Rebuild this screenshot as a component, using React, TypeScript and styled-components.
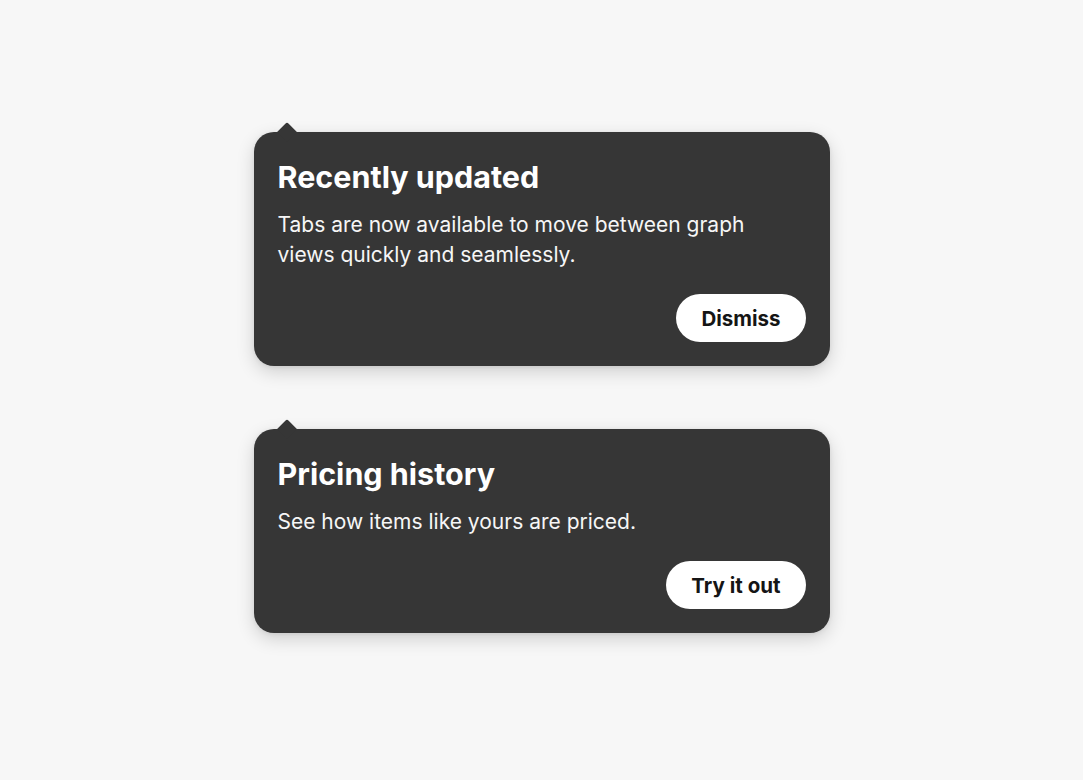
import React from "react";
import styled, { createGlobalStyle } from "styled-components";

const Global = createGlobalStyle`
  html, body { margin: 0; padding: 0; background: #f7f7f7; }
  body { font-family: Inter, "Open Sans", "Liberation Sans", sans-serif; -webkit-font-smoothing: antialiased; }
`;

const Page = styled.div`
  min-height: 780px;
  display: flex;
  flex-direction: column;
  align-items: center;
  gap: 63px;
  padding-top: 132px;
  box-sizing: border-box;
`;

const Card = styled.div`
  position: relative;
  width: 576px;
  box-sizing: border-box;
  background: #363636;
  border-radius: 20px;
  padding: 26px 24px 24px;
  color: #ffffff;
  box-shadow: 0 6px 18px rgba(0, 0, 0, 0.16), 0 1px 4px rgba(0, 0, 0, 0.08);
  display: flex;
  flex-direction: column;

  &::before {
    content: "";
    position: absolute;
    left: 26px;
    top: -7px;
    width: 14px;
    height: 14px;
    background: #363636;
    border-top-left-radius: 2px;
    transform: rotate(45deg);
  }
`;

const Title = styled.h2`
  margin: 0 0 14px;
  font-size: 30.5px;
  line-height: 38px;
  font-weight: 700;
  letter-spacing: 0;
`;

const Body = styled.p`
  margin: 0 0 24px;
  font-size: 21px;
  line-height: 30px;
  font-weight: 400;
  color: #f6f6f6;
  max-width: 480px;
`;

const Actions = styled.div`
  display: flex;
  justify-content: flex-end;
`;

const Button = styled.button`
  height: 48px;
  padding: 0 25px;
  border: none;
  border-radius: 24px;
  background: #ffffff;
  color: #151515;
  font-family: inherit;
  font-size: 20.5px;
  font-weight: 700;
  cursor: pointer;
`;

const tips = [
  {
    title: "Recently updated",
    body: "Tabs are now available to move between graph views quickly and seamlessly.",
    action: "Dismiss",
  },
  {
    title: "Pricing history",
    body: "See how items like yours are priced.",
    action: "Try it out",
  },
];

export default function App() {
  return (
    <>
      <Global />
      <Page>
        {tips.map((t) => (
          <Card key={t.title}>
            <Title>{t.title}</Title>
            <Body>{t.body}</Body>
            <Actions>
              <Button>{t.action}</Button>
            </Actions>
          </Card>
        ))}
      </Page>
    </>
  );
}
